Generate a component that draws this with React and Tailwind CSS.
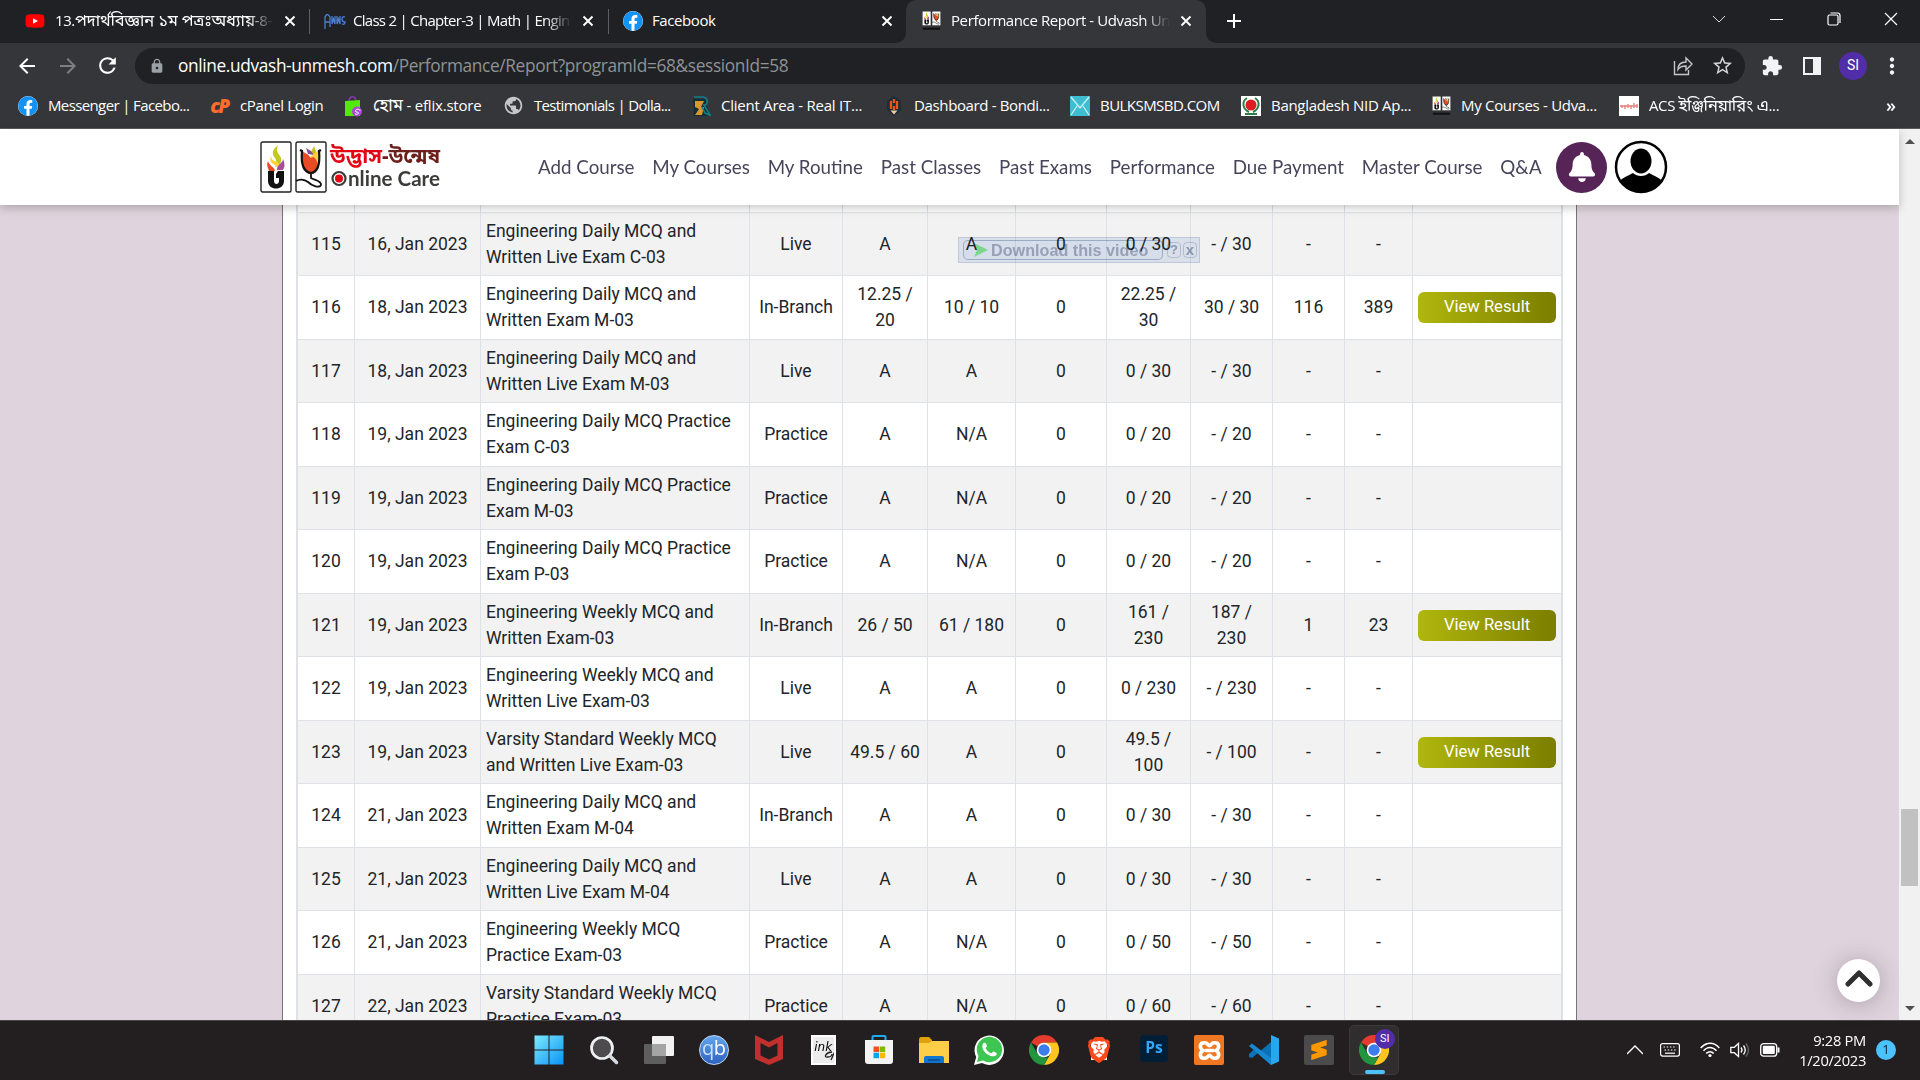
import React from "react";
import { FaFacebook, FaBell, FaYoutube } from "react-icons/fa";
import { SiBrave, SiSublimetext } from "react-icons/si";
import { MdExtension, MdLock, MdArrowBack, MdArrowForward, MdRefresh, MdStarBorder, MdMoreVert, MdPublic } from "react-icons/md";

const rows = [
  ["115", "16, Jan 2023", "Engineering Daily MCQ and|Written Live Exam C-03", "Live", "A", "A", "0", "0 / 30", "- / 30", "-", "-", false],
  ["116", "18, Jan 2023", "Engineering Daily MCQ and|Written Exam M-03", "In-Branch", "12.25 /|20", "10 / 10", "0", "22.25 /|30", "30 / 30", "116", "389", true],
  ["117", "18, Jan 2023", "Engineering Daily MCQ and|Written Live Exam M-03", "Live", "A", "A", "0", "0 / 30", "- / 30", "-", "-", false],
  ["118", "19, Jan 2023", "Engineering Daily MCQ Practice|Exam C-03", "Practice", "A", "N/A", "0", "0 / 20", "- / 20", "-", "-", false],
  ["119", "19, Jan 2023", "Engineering Daily MCQ Practice|Exam M-03", "Practice", "A", "N/A", "0", "0 / 20", "- / 20", "-", "-", false],
  ["120", "19, Jan 2023", "Engineering Daily MCQ Practice|Exam P-03", "Practice", "A", "N/A", "0", "0 / 20", "- / 20", "-", "-", false],
  ["121", "19, Jan 2023", "Engineering Weekly MCQ and|Written Exam-03", "In-Branch", "26 / 50", "61 / 180", "0", "161 /|230", "187 /|230", "1", "23", true],
  ["122", "19, Jan 2023", "Engineering Weekly MCQ and|Written Live Exam-03", "Live", "A", "A", "0", "0 / 230", "- / 230", "-", "-", false],
  ["123", "19, Jan 2023", "Varsity Standard Weekly MCQ|and Written Live Exam-03", "Live", "49.5 / 60", "A", "0", "49.5 /|100", "- / 100", "-", "-", true],
  ["124", "21, Jan 2023", "Engineering Daily MCQ and|Written Exam M-04", "In-Branch", "A", "A", "0", "0 / 30", "- / 30", "-", "-", false],
  ["125", "21, Jan 2023", "Engineering Daily MCQ and|Written Live Exam M-04", "Live", "A", "A", "0", "0 / 30", "- / 30", "-", "-", false],
  ["126", "21, Jan 2023", "Engineering Weekly MCQ|Practice Exam-03", "Practice", "A", "N/A", "0", "0 / 50", "- / 50", "-", "-", false],
  ["127", "22, Jan 2023", "Varsity Standard Weekly MCQ|Practice Exam-03", "Practice", "A", "N/A", "0", "0 / 60", "- / 60", "-", "-", false],
];

const COLS = "grid grid-cols-[57px_126px_269px_93px_85px_88px_91px_84px_82px_72px_68px_150px]";

function Lines({ text }) {
  return text.split("|").map((t) => <div key={t}>{t}</div>);
}

function Row({ data, striped }) {
  const cells = data.slice(0, 11);
  return (
    <div className={`${COLS} h-[63.5px] shrink-0 border-t border-[#dee2e6] ${striped ? "bg-[#f2f2f2]" : "bg-white"}`}>
      {cells.map((c, i) => (
        <div
          key={i}
          className={`flex flex-col justify-center whitespace-nowrap border-l border-[#dee2e6] pb-px ${i === 2 ? "items-start pl-[5px]" : "items-center"}`}
        >
          <Lines text={c} />
        </div>
      ))}
      <div className="flex items-center border-l border-r border-[#dee2e6] pl-[5px]">
        {data[11] && (
          <div className="flex h-[31px] w-[138px] items-center justify-center rounded-[6px] bg-gradient-to-r from-[#b0b70d] to-[#7b7e00] pb-px text-[16.6px] text-white">
            View Result
          </div>
        )}
      </div>
    </div>
  );
}

function CloseX({ className = "" }) {
  return (
    <svg viewBox="0 0 12 12" className={`h-3 w-3 shrink-0 ${className}`} stroke="#fff" strokeWidth="1.9" fill="none">
      <path d="M1.5 1.5l9 9M10.5 1.5l-9 9" />
    </svg>
  );
}

function FbIcon() {
  return (
    <span className="flex h-5 w-5 shrink-0 items-center justify-center rounded-full bg-white">
      <FaFacebook className="h-5 w-5 text-[#1292f5]" />
    </span>
  );
}

function TorchArt() {
  return (
    <>
      <rect x="1" y="1" width="30" height="50" rx="1.5" fill="#fff" stroke="#222" strokeWidth="1.4" />
      <path d="M18 4c-5 4-7 8-3 13 2 3 2 6 0 9 5-2 8-6 5-11-3-4-4-6-2-11z" fill="#c3c81f" />
      <path d="M11 15c-2 5 1 8 4 9 3 2 3 4 2 6 4-3 4-7 0-9-4-1-6-3-6-6z" fill="#fcd23c" />
      <path d="M8 20c-2 4 0 6 1 10h6c0-4-6-5-7-10z" fill="#e84a25" />
      <path d="M23 18c0 4-6 5-6 11h6c2-3 2-7 0-11z" fill="#a4509b" />
      <path d="M8 30h6v10c0 4 5 4 5 0v-3h-3v-4l2-3h6v10c0 10-16 10-16 0z" fill="#111" />
    </>
  );
}

function TulipArt() {
  return (
    <>
      <rect x="1" y="1" width="30" height="50" rx="1.5" fill="#fff" stroke="#222" strokeWidth="1.4" />
      <path d="M15 13l4-8 3 8z" fill="#bfc51b" />
      <path d="M11 7l5 3 3 4-6-1z" fill="#8e4b95" />
      <path d="M25 8c1 9 0 17-6 22l-4-14z" fill="#fcd23c" />
      <path d="M6.500 9c3 4 7 3 9 8l3-1c5 3 6 12 0 17h-5c-6-5-7-13-7-24z" fill="#e84a25" />
      <path d="M5 9l2 1c-1 11 1 21 9 22 8-1 9-11 8-22l2-1" fill="none" stroke="#111" strokeWidth="2.200" />
      <path d="M16 33v4c3 2 11 3 10 7-2 4-10 0-13-3-4-3-9-3-12-1" fill="none" stroke="#111" strokeWidth="1.800" />
    </>
  );
}

function MiniLogo() {
  return (
    <svg viewBox="0 0 66 70" className="h-5 w-[19px] shrink-0">
      <TorchArt />
      <g transform="translate(34 0)"><TulipArt /></g>
      <path d="M3 62h60" stroke="#111" strokeWidth="7" />
    </svg>
  );
}

function Tab({ width, icon, label, labelWidth, gap, fade, tracking = "" }) {
  return (
    <div className={`flex h-[42px] shrink-0 items-center ${width}`}>
      {icon}
      <span
        className={`mb-[2px] overflow-hidden whitespace-nowrap text-[15px] leading-[26px] text-white ${labelWidth} ${gap} ${tracking} ${fade ? "[mask-image:linear-gradient(to_right,#000_88%,transparent)]" : ""}`}
      >
        {label}
      </span>
      <CloseX className="ml-auto" />
    </div>
  );
}

function TabBar() {
  return (
    <div className="flex h-[43px] items-start bg-[#202124]">
      <div className="w-[25px]" />
      <Tab
        width="w-[271px]"
        icon={<span className="flex h-5 w-5 items-center justify-center"><FaYoutube className="h-5 w-5 text-[#f00] [background:linear-gradient(#fff,#fff)_center/8px_8px_no-repeat]" /></span>}
        label={<>13.<span className="text-[16.5px] tracking-[-0.15px]">পদার্থবিজ্ঞান ১ম পত্রঃঅধ্যায়</span>-8-</>}
        labelWidth="w-[219px]" gap="ml-2.5" fade tracking="tracking-[-0.4px]"
      />
      <div className="ml-[13px] mt-[9px] h-[25px] w-px bg-[#5c5e62]" />
      <div className="w-[14px]" />
      <Tab
        width="w-[270px]"
        icon={
          <svg viewBox="0 0 22 20" className="h-5 w-[22px] shrink-0" fill="none" stroke="#4a7fd6" strokeWidth="1.3">
            <path d="M1 18V6q2-5 5 0v10M1 11h5M8 5v8l1.500-5 1.500 5V5M13 5v8l1.500-5 1.500 5V5M21 6q-3-1-3 2t3 3q0 3-3 2" />
          </svg>
        }
        label="Class 2 | Chapter-3 | Math | Engin"
        labelWidth="w-[219px]" gap="ml-[7px]" fade tracking="tracking-[-0.72px]"
      />
      <div className="ml-[14px] mt-[9px] h-[25px] w-px bg-[#5c5e62]" />
      <div className="w-[14px]" />
      <Tab width="w-[270px]" icon={<FbIcon />} label="Facebook" labelWidth="w-[120px]" gap="ml-[9px]" tracking="tracking-[-0.4px]" />
      <div className="ml-[3px] h-[43px] w-[10px] bg-[#35363a]"><div className="h-full w-full rounded-br-[10px] bg-[#202124]" /></div>
      <div className="h-[43px] w-[300px] rounded-t-[10px] bg-[#35363a] pl-[16px]">
        <Tab width="w-[270px]" icon={<MiniLogo />} label="Performance Report - Udvash Un" labelWidth="w-[219px]" gap="ml-[10px]" fade tracking="tracking-[-0.4px]" />
      </div>
      <div className="h-[43px] w-[10px] bg-[#35363a]"><div className="h-full w-full rounded-bl-[10px] bg-[#202124]" /></div>
      <svg viewBox="0 0 16 16" className="ml-[10px] mt-[13px] h-4 w-4" stroke="#fff" strokeWidth="2"><path d="M8 1v14M1 8h14" /></svg>
      <div className="ml-auto flex h-[37px] items-center gap-[43.500px] pr-[22px]">
        <svg viewBox="0 0 14 14" className="h-3.5 w-3.5" fill="none" stroke="#ddd"><path d="M1 4l6 6 6-6" /></svg>
        <svg viewBox="0 0 14 14" className="h-3.5 w-3.5" fill="none" stroke="#fff"><path d="M1 7.5h13" /></svg>
        <svg viewBox="0 0 14 14" className="h-3.5 w-3.5" fill="none" stroke="#fff" strokeWidth="1.2"><rect x="1" y="3" width="10" height="10" rx="1.5" /><path d="M3.5 1H10.500Q13 1 13 3.500V11" /></svg>
        <svg viewBox="0 0 14 14" className="h-3.5 w-3.5" fill="none" stroke="#fff" strokeWidth="1.2"><path d="M1 1l12 12M13 1L1 13" /></svg>
      </div>
    </div>
  );
}

function Toolbar() {
  return (
    <div className="flex h-[45px] items-center bg-[#35363a]">
      <MdArrowBack className="ml-[15px] h-6 w-6 shrink-0 text-white" />
      <MdArrowForward className="ml-[17px] h-6 w-6 shrink-0 text-[#7d7e82]" />
      <MdRefresh className="ml-[15px] h-[25px] w-[25px] shrink-0 text-white" />
      <div className="ml-[15px] flex h-9 w-[1610px] shrink-0 items-center rounded-full bg-[#202124] pl-[14px] pr-[11px]">
        <MdLock className="h-4 w-4 text-[#9aa0a6]" />
        <span className="ml-[13px] whitespace-nowrap text-[17.3px] leading-6 tracking-[-0.36px] text-[#8f9296]">
          <span className="text-white">online.udvash-unmesh.com</span>/Performance/Report?programId=68&amp;sessionId=58
        </span>
        <svg viewBox="0 0 20 20" className="ml-auto h-5 w-5" fill="none" stroke="#c4c6c9" strokeWidth="1.4">
          <path d="M1.500 5v13.500h14V14M5 13.500c0-5 3-7.500 8-7.500V2l6 6-6 6V10c-4 0-6.500 1-8 3.500z" />
        </svg>
        <MdStarBorder className="ml-[18px] h-[23px] w-[23px] text-[#d0d2d5]" />
      </div>
      <MdExtension className="ml-[16px] h-[22px] w-[22px] shrink-0 text-[#f1f3f4]" />
      <div className="ml-[20px] h-[18px] w-[18px] shrink-0 border-[2.5px] border-r-[8px] border-[#f1f3f4]" />
      <div className="ml-[18px] flex h-7 w-7 shrink-0 items-center justify-center rounded-full bg-[#512da8] text-[14px] text-white font-['Roboto',sans-serif]">SI</div>
      <MdMoreVert className="ml-[12px] h-[26px] w-[26px] shrink-0 text-[#f1f3f4]" />
    </div>
  );
}

const CpanelIcon = () => (
  <span className="flex h-5 w-[21px] shrink-0 items-center justify-center text-[19px] font-extrabold italic tracking-[-1.500px] text-[#ff6c2c]">cP</span>
);
const EflixIcon = () => (
  <svg viewBox="0 0 20 22" className="h-[22px] w-5 shrink-0"><path d="M6 7c0-7 7-7 7 0" fill="none" stroke="#8d35b8" strokeWidth="1.5" /><path d="M2 6l15-1v16H2z" fill="#55e80c" /><circle cx="14" cy="16.500" r="5" fill="#a94bd4" /><path d="M12 19c4 1 5-2 1-2-2-3 4-4 4-1" fill="none" stroke="#fff" /></svg>
);
const RealIcon = () => (
  <svg viewBox="0 0 20 20" className="h-5 w-5 shrink-0"><path d="M2 3h12l5 15-4 2H3z" fill="#102f38" /><path d="M4 5h9l-3 6h3l-2 8H4l4-6-4-2z" fill="#d9962c" /><path d="M3 1h9c6 1 5 8 1 8l6 10-5-2-3-6" fill="none" stroke="#10808a" strokeWidth="1.600" /></svg>
);
const BondiIcon = () => (
  <svg viewBox="0 0 20 20" className="h-5 w-5 shrink-0"><path d="M10 0l7 5v9l-7 6-7-6V5z" fill="#1e2c3a" /><path d="M7 5v8M10 3v4M10 10v4M13 5v8" stroke="#e8541c" strokeWidth="2.300" /><path d="M6.500 14.500h7L10 18.500z" fill="#f3c899" /></svg>
);
const MailIcon = () => (
  <svg viewBox="0 0 20 20" className="h-5 w-5 shrink-0"><path fill="#3fbdd0" d="M0 0h20v20H0z" /><path d="M1 1l9 11 9-11M1 19l6-9M19 19l-6-9" fill="none" stroke="#c9f0f5" strokeWidth="1.300" /></svg>
);
const NidIcon = () => (
  <svg viewBox="0 0 20 20" className="h-5 w-5 shrink-0"><path fill="#fff" d="M0 0h20v20H0z" /><circle cx="10" cy="9" r="5.500" fill="#dd1d22" /><path d="M6 2C0 6 2 13 8 16M14 2c6 4 4 11-2 14M4 18h12" fill="none" stroke="#2d7d46" strokeWidth="2" /></svg>
);
const AcsIcon = () => (
  <svg viewBox="0 0 20 20" className="h-5 w-5 shrink-0"><path fill="#fff" d="M0 0h20v20H0z" /><path d="M1 10h18M3 9v3M6 9v4M9 8v4M12 9v4M15 7v5M18 8v4" stroke="#e8857f" strokeWidth="1.400" /></svg>
);

const bookmarks = [
  { id: "fb", icon: <FbIcon />, label: "Messenger | Facebo...", w: "w-[191px] tracking-[-0.62px]" },
  { id: "cp", icon: <CpanelIcon />, label: <span className="tracking-[-0.38px]">cPanel Login</span>, w: "w-[134px]" },
  { id: "ef", icon: <EflixIcon />, label: <><span className="text-[17px]">হোম</span> - eflix.store</>, w: "w-[160px] tracking-[-0.2px]" },
  { id: "te", icon: <MdPublic className="h-[21px] w-[21px] text-[#c3c6ca]" />, label: "Testimonials | Dolla...", w: "w-[188px] tracking-[-0.66px]" },
  { id: "cl", icon: <RealIcon />, label: "Client Area - Real IT...", w: "w-[193px] tracking-[-0.24px]" },
  { id: "da", icon: <BondiIcon />, label: "Dashboard - Bondi...", w: "w-[186px] tracking-[-0.36px]" },
  { id: "bu", icon: <MailIcon />, label: "BULKSMSBD.COM", w: "w-[171px] tracking-[-0.54px]" },
  { id: "ni", icon: <NidIcon />, label: "Bangladesh NID Ap...", w: "w-[191px] tracking-[-0.3px]" },
  { id: "my", icon: <MiniLogo />, label: "My Courses - Udva...", w: "w-[187px] tracking-[-0.3px]" },
  { id: "ac", icon: <AcsIcon />, label: <>ACS <span className="text-[16.500px]">ইঞ্জিনিয়ারিং এ</span>...</>, w: "w-[180px] tracking-[-0.38px]" },
];

function Bookmarks() {
  return (
    <div className="flex h-[41px] items-center border-b border-[#5a5b5f] bg-[#35363a] pb-[5px] pl-[18px] text-[15px] leading-[26px] text-white">
      {bookmarks.map((b) => (
        <div key={b.id} className={`flex shrink-0 items-center gap-[10px] whitespace-nowrap ${b.w}`}>
          {b.icon}
          <span className="mb-[2px]">{b.label}</span>
        </div>
      ))}
      <span className="mb-[2px] ml-auto pr-[24px] text-[18px] font-semibold">»</span>
    </div>
  );
}

function SiteHeader() {
  return (
    <header className="relative z-10 flex h-[76px] items-center bg-white pl-[260px] shadow-[0_3px_9px_rgba(0,0,0,0.22)]">
      <svg viewBox="0 0 182 52" className="h-[52px] w-[182px] shrink-0 overflow-visible">
        <TorchArt />
        <g transform="translate(35 0)"><TulipArt /></g>
        <text x="70" y="22" textLength="52" lengthAdjust="spacingAndGlyphs" fontSize="21" fontWeight="700" fill="#e30613" fontFamily="Noto Sans Bengali, sans-serif">উদ্ভাস</text>
        <text x="122" y="22" textLength="58" lengthAdjust="spacingAndGlyphs" fontSize="21" fontWeight="700" fill="#6d1f1c" fontFamily="Noto Sans Bengali, sans-serif">-উন্মেষ</text>
        <circle cx="79" cy="37.500" r="6.500" fill="#fff" stroke="#3c3c3b" strokeWidth="2.200" />
        <circle cx="79" cy="37.500" r="4" fill="#e30613" />
        <text x="88" y="44.500" textLength="92" lengthAdjust="spacingAndGlyphs" fontSize="20" fontWeight="700" fill="#3c3c3b" fontFamily="Lato, sans-serif">nline Care</text>
      </svg>
      <nav className="ml-[96px] flex w-[1003px] shrink-0 gap-[17.800px] whitespace-nowrap text-[18.75px] text-[#46455a] font-['Lato',sans-serif]">
        {["Add Course", "My Courses", "My Routine", "Past Classes", "Past Exams", "Performance", "Due Payment", "Master Course", "Q&A"].map((n) => (
          <a key={n}>{n}</a>
        ))}
      </nav>
      <div className="ml-[15px] mr-[8px] flex h-[51px] w-[51px] shrink-0 items-center justify-center rounded-full bg-[#562456]">
        <FaBell className="h-[30px] w-[28px] text-white" />
      </div>
      <svg viewBox="0 0 54 54" className="-ml-px h-[54px] w-[54px] shrink-0">
        <defs><clipPath id="avatar"><circle cx="27" cy="27" r="24.500" /></clipPath></defs>
        <circle cx="27" cy="27" r="25" fill="#fff" stroke="#000" strokeWidth="2.500" />
        <g clipPath="url(#avatar)"><ellipse cx="27" cy="21" rx="10.500" ry="12.500" /><path d="M4 54V44c2-6 10-8 15-11 4 4 12 4 16 0 5 3 13 5 15 11v10z" /></g>
      </svg>
    </header>
  );
}

function DownloadOverlay() {
  return (
    <div className="absolute left-[675px] top-[32px] flex h-[26px] w-[242px] items-center border border-[#b6c3d8]/60 bg-[#d3e0f2]/60 pl-1 mix-blend-multiply font-['Liberation_Sans',sans-serif]">
      <div className="flex h-5 w-[200px] items-center rounded-[5px] border border-[#7f92b8]/60 bg-[#dbe8f8]/40 pl-[10px]">
        <svg viewBox="0 0 14 14" className="h-[14px] w-[14px]"><path d="M0 0l14 7-14 7 3-7z" fill="#7be08a" opacity=".9" /></svg>
        <span className="ml-[3px] whitespace-nowrap text-[16.2px] font-bold text-[#8994ae]/75">Download this video</span>
      </div>
      <span className="ml-1 flex h-4 w-[14px] items-center justify-center rounded border border-[#94a4c2]/50 text-[13px] font-bold text-[#7c8bab]/80">?</span>
      <span className="ml-[2px] flex h-4 w-[14px] items-center justify-center rounded border border-[#94a4c2]/50 pb-[2px] text-[15px] font-bold leading-none text-[#7c8bab]/80">x</span>
    </div>
  );
}

function Page() {
  return (
    <div className="flex h-[891px]">
      <div className="relative flex w-[1899px] flex-col bg-[#dfd4dd]">
        <SiteHeader />
        <main className="relative ml-[282px] h-[815px] w-[1295px] overflow-hidden border-x border-[#77757a] bg-white pl-[13px] text-[17.5px] leading-[26px] text-[#212529] font-['Roboto',sans-serif]">
          <div className="w-[1267px] border-x border-[#dee2e6]">
            <div className={`${COLS} h-[6.800px]`}>
              {rows[0].map((_, i) => <div key={i} className="border-l border-[#dee2e6] last:border-r" />)}
            </div>
            {rows.map((r, i) => <Row key={r[0]} data={r} striped={i % 2 === 0} />)}
          </div>
          <DownloadOverlay />
        </main>
        <button className="absolute bottom-[18px] right-[19px] flex h-[43px] w-[43px] items-center justify-center rounded-full bg-white shadow-[0_2px_24px_rgba(60,30,60,0.3)]">
          <svg viewBox="0 0 28 20" className="h-5 w-7 -translate-y-[3px]" fill="none" stroke="#2f2f2f" strokeWidth="5"><path d="M3 16L14 5 25 16" strokeLinejoin="round" strokeLinecap="round" /></svg>
        </button>
      </div>
      <div className="flex w-[21px] flex-col items-center bg-[#f1f1f1]">
        <svg viewBox="0 0 10 6" className="mt-[9px] h-[6px] w-[10px]"><path d="M0 6l5-5 5 5z" fill="#505050" /></svg>
        <div className="mt-[665px] h-[77px] w-[17px] bg-[#c1c1c1]" />
        <svg viewBox="0 0 10 6" className="mb-[8px] mt-auto h-[6px] w-[10px]"><path d="M0 0l5 5 5-5z" fill="#505050" /></svg>
      </div>
    </div>
  );
}

function Chrome() {
  return (
    <svg viewBox="0 0 30 30" className="h-[30px] w-[30px]">
      <path d="M15 15L2 7.500A15 15 0 0 1 28 7.500H15z" fill="#e33b2e" />
      <path d="M28 7.500A15 15 0 0 1 15 30l6.500-11.200L15 7.500z" fill="#fdc51d" />
      <path d="M2 7.500L8.500 18.800 15 22.500h4.300L15 30A15 15 0 0 1 2 7.500z" fill="#23953f" />
      <circle cx="15" cy="15" r="7.300" fill="#fff" /><circle cx="15" cy="15" r="5.700" fill="#3b7ded" />
    </svg>
  );
}

const apps = [
  <svg viewBox="0 0 30 30" className="h-[30px] w-[30px]"><defs><linearGradient id="win" x2="1" y2="1"><stop stopColor="#7deaff" /><stop offset="1" stopColor="#0a93f5" /></linearGradient></defs><path d="M.5.5h14v14H.5zM15.500.5h14v14h-14zM.5 15.500h14v14H.5zM15.500 15.500h14v14h-14z" fill="url(#win)" /></svg>,
  <svg viewBox="0 0 30 30" className="h-[30px] w-[30px]" fill="none"><circle cx="13" cy="13" r="10.500" fill="#4d4b4d" stroke="#eef0f2" strokeWidth="2.700" /><path d="M21 21l6.500 6.500" stroke="#d6dbe0" strokeWidth="3.500" strokeLinecap="round" /></svg>,
  <svg viewBox="0 0 30 30" className="h-[30px] w-[30px]"><rect x="8" y="1" width="22" height="20" rx="1" fill="#f2f2f2" /><rect x="0" y="9" width="22" height="20" rx="1" fill="#5e5e5e" /><path d="M8 9h14v12H8z" fill="#a5a5a5" /></svg>,
  <div className="flex h-[30px] w-[30px] items-center justify-center rounded-full border border-[#c0d9f5] bg-gradient-to-b from-[#65a6ec] to-[#2e62bf] pb-1 text-[20px] leading-none tracking-[-0.5px] text-white"><span className="text-[#c9e2ff]">q</span>b</div>,
  <svg viewBox="0 0 28 30" className="h-[30px] w-[28px]"><path d="M0 0l14 7L28 0v24l-14 6-14-6zM5.500 8v12.500L14 24.500l8.500-4V8L14 12.500z" fill="#c1302c" fillRule="evenodd" /></svg>,
  <div className="relative h-[30px] w-[25px] overflow-hidden border-2 border-white bg-[#ececec] pl-px text-[12px] italic leading-[20px] text-black font-['DejaVu_Sans',sans-serif]">ink<svg viewBox="0 0 12 12" className="absolute -right-[2px] bottom-[2px] h-3 w-3" fill="none" stroke="#222"><path d="M12 0L7 11M8 3C2 3-1 9 4 8c3 0 4-2 4-3" strokeWidth="1.300" /></svg></div>,
  <svg viewBox="0 0 30 30" className="h-[30px] w-[30px]"><path d="M8.500 6V2q0-1 1-1h11q1 0 1 1v4" fill="none" stroke="#1fa9ef" strokeWidth="2" /><path d="M1 5h28v21q0 3-3 3H4q-3 0-3-3z" fill="#f3f3f3" /><path d="M9.500 11.500H15V17H9.500z" fill="#f25022" /><path d="M15.700 11.500h5.500V17h-5.500z" fill="#7fba00" /><path d="M9.500 17.700H15v5.500H9.500z" fill="#00a4ef" /><path d="M15.700 17.700h5.500v5.500h-5.500z" fill="#ffb900" /></svg>,
  <svg viewBox="0 0 30 30" className="h-[30px] w-[30px]"><path d="M0 5q0-3 2-3h8l3 3v4H0z" fill="#e0a10e" /><path d="M0 8h10l3-2h17v22H0z" fill="#ffce48" /><path d="M5 28v-5q0-2 2-2h16q2 0 2 2v5z" fill="#1175cf" /><path d="M9 25h12" stroke="#0a3f7d" strokeWidth="1.200" /></svg>,
  <svg viewBox="0 0 30 30" className="h-[30px] w-[30px]"><path d="M0 30l2.200-8A14.700 14.700 0 1 1 8 28z" fill="#fff" /><path d="M3 27l1.500-6A12.700 12.700 0 1 1 9 25.500z" fill="#3ec652" /><path d="M9.500 8c2-1 2.500 0 3.500 3 0 1-1.500 1.700-1.300 2.300 1.300 2.500 3 4 5.500 5 1-.5 1.700-2.200 2.500-1.800 3 1.500 3.500 1.500 2.800 3.500-5 5-18-5-13-12z" fill="#fff" /></svg>,
  <Chrome />,
  <span className="relative flex h-[30px] w-[26px] items-center justify-center"><span className="absolute h-5 w-4 bg-white" /><SiBrave className="relative h-[30px] w-[30px] text-[#fb4a1c]" /></span>,
  <div className="mb-1 flex h-[27px] w-[28px] items-center justify-center rounded-[4px] bg-[#001e36] text-[15.500px] font-bold text-[#31a8ff]">Ps</div>,
  <div className="flex h-[30px] w-[30px] items-center justify-center rounded-[2px] bg-[#ef7722]"><svg viewBox="0 0 24 22" className="h-[21px] w-[23px]" fill="none" stroke="#fff" strokeWidth="3.800" strokeLinecap="round" strokeLinejoin="round"><path d="M5 11c-4-3-3-8 1-8 4-1 4 3 6 3s2-4 6-3c4 0 5 5 1 8 4 3 3 8-1 8-4 1-4-3-6-3s-2 4-6 3c-4 0-5-5-1-8zM8 11h8" /></svg></div>,
  <svg viewBox="0 0 30 30" className="h-[30px] w-[30px]"><path d="M22 0v30L5 14.500 0 19v3l3 1L22 7z" fill="#0b72b8" /><path d="M0 11l3-2.500L22 23v7L0 11z" fill="#1688cf" /><path d="M22 0l8 3.500v23L22 30z" fill="#27a6f2" /></svg>,
  <div className="flex h-[30px] w-[30px] items-center justify-center rounded-[2px] bg-[#4b4b4b]"><SiSublimetext className="h-5 w-5 text-[#ff9800]" /></div>,
];

function Taskbar() {
  return (
    <div className="flex h-[60px] border-t border-[#4a474a] bg-[#231f21]">
      <div className="mb-px ml-[521px] flex items-center">
        {apps.map((a, i) => <div key={i} className="flex w-[55.050px] justify-center">{a}</div>)}
        <div className="relative ml-[2px] flex h-[50px] w-[50px] items-center justify-center rounded-[5px] border border-[#3d3a3c] bg-[#302d2f]">
          <Chrome />
          <div className="absolute right-[3px] top-[3px] flex h-5 w-5 items-center justify-center rounded-full bg-[#512da8] text-[11px] text-white font-['Roboto',sans-serif]">SI</div>
          <div className="absolute bottom-0 left-[15px] h-1 w-5 rounded-full bg-[#4cc2ff]" />
        </div>
      </div>
      <div className="mb-[2px] ml-auto flex items-center pr-[24px]">
        <svg viewBox="0 0 16 10" className="h-[10px] w-4" fill="none" stroke="#fff" strokeWidth="1.300"><path d="M0 9l8-8 8 8" /></svg>
        <svg viewBox="0 0 20 14" className="ml-[17px] h-[14px] w-5" fill="none" stroke="#fff" strokeWidth="1.200"><rect x=".6" y=".6" width="18.800" height="12.500" rx="2" /><path d="M3.500 4h13M4.500 7h12" strokeDasharray="1.500 1.700" /><path d="M5 10.200h10" /></svg>
        <svg viewBox="0 0 20 16" className="ml-5 h-4 w-5" fill="none" stroke="#fff" strokeWidth="1.500"><path d="M.7 6C6-.3 14-.3 19.300 6M3.500 8.800c4-4.500 9-4.500 13 0M6.300 11.500c2-2.500 5.400-2.500 7.400 0" /><circle cx="10" cy="13.500" r="1.600" fill="#fff" stroke="none" /></svg>
        <svg viewBox="0 0 20 16" className="ml-[10px] h-4 w-5" fill="none" stroke="#fff" strokeWidth="1.300"><path d="M.8 5.300h3.500L8.500 1.500v13L4.300 10.700H.8zM11 5.500q2 2.500 0 5M13.500 3.500q3.500 4.500 0 9" /><path d="M16 1.500q5 6.500 0 13" stroke="#666" /></svg>
        <svg viewBox="0 0 20 14" className="ml-[10px] h-[14px] w-5" fill="none" stroke="#fff" strokeWidth="1.300"><rect x=".7" y=".7" width="16" height="12.500" rx="3" /><rect x="2.800" y="2.800" width="12" height="8.300" rx="1" fill="#fff" stroke="none" /><path d="M18.500 4.500v5" strokeWidth="2" /></svg>
        <div className="ml-[18px] w-[68px] whitespace-nowrap text-right text-[14.700px] leading-[20px] tracking-[-0.300px] text-white">
          <div>9:28 PM</div>
          <div className="flex justify-end">1/20/2023</div>
        </div>
        <div className="ml-[10px] flex h-5 w-5 items-center justify-center rounded-full bg-[#4cc2ff] text-[13px] text-[#10222e]">1</div>
      </div>
    </div>
  );
}

export default function App() {
  return (
    <div className="h-[1080px] w-[1920px] overflow-hidden font-['Open_Sans','Noto_Sans','Noto_Sans_Bengali',sans-serif]">
      <TabBar />
      <Toolbar />
      <Bookmarks />
      <Page />
      <Taskbar />
    </div>
  );
}
